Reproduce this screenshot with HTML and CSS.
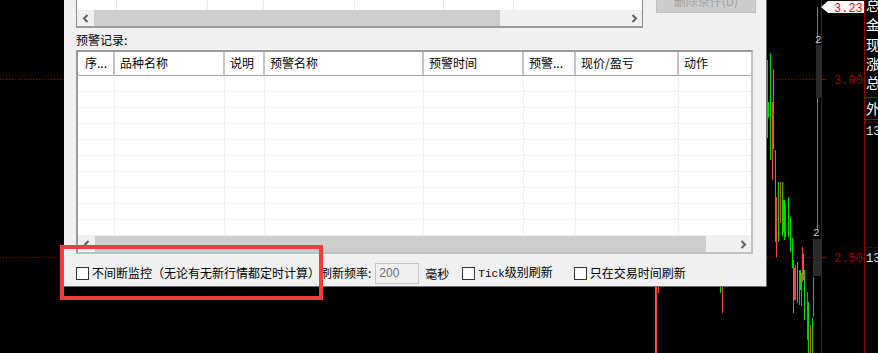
FILE: index.html
```html
<!DOCTYPE html>
<html lang="zh-CN">
<head>
<meta charset="utf-8">
<title>预警记录</title>
<link rel="stylesheet" href="styles.css">
</head>
<body>
<div class="screen">
  <svg class="chart" width="878" height="353" viewBox="0 0 878 353">
    <g class="dots" stroke="#a00000" stroke-width="1" stroke-dasharray="1 2">
      <line x1="0" y1="79.5" x2="64" y2="79.5"/>
      <line x1="767" y1="79.5" x2="821" y2="79.5"/>
      <line x1="0" y1="257.5" x2="64" y2="257.5"/>
      <line x1="767" y1="257.5" x2="821" y2="257.5"/>
      <line x1="865" y1="122.5" x2="878" y2="122.5"/>
      <line x1="865" y1="247.5" x2="878" y2="247.5"/>
    </g>
    <g stroke="#a00000" stroke-width="1">
      <line x1="822" y1="79.5" x2="826" y2="79.5"/>
      <line x1="822" y1="257.5" x2="826" y2="257.5"/>
      <line x1="864" y1="97.5" x2="878" y2="97.5"/>
      <line x1="864" y1="119.5" x2="878" y2="119.5"/>
    </g>
    <g stroke="#8b0000" stroke-width="1">
      <line x1="821.5" y1="0" x2="821.5" y2="353"/>
      <line x1="864.5" y1="0" x2="864.5" y2="353"/>
    </g>
    <rect x="816" y="45" width="5" height="53" fill="#2b2b2b"/>
    <rect x="813" y="239" width="8" height="37" fill="#2b2b2b"/>
    <g stroke="#00e000" stroke-width="1">
      <line x1="767.5" y1="60" x2="767.5" y2="138"/>
      <line x1="768.5" y1="102" x2="768.5" y2="118"/>
      <line x1="770.5" y1="53" x2="770.5" y2="160"/>
      <line x1="773.5" y1="69" x2="773.5" y2="149"/>
      <line x1="775.5" y1="150" x2="775.5" y2="242"/>
      <line x1="778.5" y1="182" x2="778.5" y2="242"/>
      <line x1="782.5" y1="182" x2="782.5" y2="236"/>
      <line x1="784.5" y1="200" x2="784.5" y2="240"/>
      <line x1="788.5" y1="197" x2="788.5" y2="237"/>
      <line x1="790.5" y1="217" x2="790.5" y2="252"/>
      <line x1="792.5" y1="238" x2="792.5" y2="268"/>
      <line x1="793.5" y1="260" x2="793.5" y2="313"/>
      <line x1="797.5" y1="262" x2="797.5" y2="303"/>
      <line x1="800.5" y1="270" x2="800.5" y2="290"/>
      <line x1="803.5" y1="254" x2="803.5" y2="280"/>
      <line x1="804.5" y1="270" x2="804.5" y2="320"/>
      <line x1="808.5" y1="302" x2="808.5" y2="353"/>
      <line x1="812.5" y1="318" x2="812.5" y2="353"/>
      <line x1="655.5" y1="287" x2="655.5" y2="353"/>
      <line x1="720.5" y1="287" x2="720.5" y2="293"/>
    </g>
    <g stroke="#ff4040" stroke-width="1">
      <line x1="772.5" y1="102" x2="772.5" y2="180"/>
      <line x1="776.5" y1="197" x2="776.5" y2="257"/>
      <line x1="780.5" y1="182" x2="780.5" y2="223"/>
      <line x1="783.5" y1="200" x2="783.5" y2="232"/>
      <line x1="785.5" y1="205" x2="785.5" y2="237"/>
      <line x1="794.5" y1="268" x2="794.5" y2="300"/>
      <line x1="795.5" y1="265" x2="795.5" y2="300"/>
      <line x1="799.5" y1="270" x2="799.5" y2="305"/>
      <line x1="801.5" y1="273" x2="801.5" y2="306"/>
      <line x1="802.5" y1="247" x2="802.5" y2="282"/>
      <line x1="807.5" y1="292" x2="807.5" y2="340"/>
      <line x1="810.5" y1="325" x2="810.5" y2="353"/>
      <line x1="813.5" y1="277" x2="813.5" y2="317"/>
      <line x1="817.5" y1="7" x2="817.5" y2="44"/>
      <line x1="817.5" y1="98" x2="817.5" y2="230"/>
      <line x1="656.5" y1="287" x2="656.5" y2="353"/>
      <line x1="658.5" y1="287" x2="658.5" y2="293"/>
      <line x1="722.5" y1="287" x2="722.5" y2="313"/>
    </g>
    <polygon points="821,7 828,1 864,1 864,13 828,13" fill="#ffffff"/>
    <text class="px px-hi" x="834" y="12">3.23</text>
    <text class="px" x="834" y="84">3.00</text>
    <text class="px" x="834" y="262">2.50</text>
    <text class="vol" x="815" y="43">2</text>
    <text class="vol" x="813" y="236">2</text>
    <text class="side" x="866" y="10">总</text>
    <text class="side" x="866" y="30">金</text>
    <text class="side" x="866" y="50">现</text>
    <text class="side" x="866" y="69">涨</text>
    <text class="side" x="866" y="88">总</text>
    <text class="side" x="866" y="114">外</text>
    <text class="num" x="866" y="135">13</text>
    <text class="num" x="866" y="262">13</text>
  </svg>

  <div class="dialog">
    <div class="toprow">
      <div class="list list-top">
        <div class="body-top">
          <span class="tc" style="width:39px"></span>
          <span class="tc" style="width:90px"></span>
          <span class="tc" style="width:55px"></span>
          <span class="tc" style="width:90px"></span>
          <span class="tc" style="width:88px"></span>
          <span class="tc" style="width:69px"></span>
        </div>
        <div class="hscroll">
          <span class="arrow"><svg width="8" height="9" viewBox="0 0 8 9"><polyline points="5.5,1 2,4.5 5.5,8" fill="none" stroke="#606060" stroke-width="2"/></svg></span>
          <span class="thumb thumb-top"></span>
          <span class="track"></span>
          <span class="arrow"><svg width="8" height="9" viewBox="0 0 8 9"><polyline points="2.5,1 6,4.5 2.5,8" fill="none" stroke="#606060" stroke-width="2"/></svg></span>
        </div>
      </div>
      <button class="btn" disabled>删除条件(D)</button>
    </div>

    <div class="label">预警记录:</div>

    <div class="list list-main">
      <div class="grid thead">
        <div class="th th-first">序...</div>
        <div class="th">品种名称</div>
        <div class="th">说明</div>
        <div class="th">预警名称</div>
        <div class="th">预警时间</div>
        <div class="th">预警...</div>
        <div class="th">现价/盈亏</div>
        <div class="th th-last">动作</div>
      </div>
      <div class="tbody">
        <div class="grid row"><i></i><i></i><i></i><i></i><i></i><i></i><i></i><i></i></div>
        <div class="grid row"><i></i><i></i><i></i><i></i><i></i><i></i><i></i><i></i></div>
        <div class="grid row"><i></i><i></i><i></i><i></i><i></i><i></i><i></i><i></i></div>
        <div class="grid row"><i></i><i></i><i></i><i></i><i></i><i></i><i></i><i></i></div>
        <div class="grid row"><i></i><i></i><i></i><i></i><i></i><i></i><i></i><i></i></div>
        <div class="grid row"><i></i><i></i><i></i><i></i><i></i><i></i><i></i><i></i></div>
        <div class="grid row"><i></i><i></i><i></i><i></i><i></i><i></i><i></i><i></i></div>
        <div class="grid row"><i></i><i></i><i></i><i></i><i></i><i></i><i></i><i></i></div>
        <div class="grid row"><i></i><i></i><i></i><i></i><i></i><i></i><i></i><i></i></div>
        <div class="grid row"><i></i><i></i><i></i><i></i><i></i><i></i><i></i><i></i></div>
      </div>
      <div class="hscroll">
        <span class="arrow"><svg width="8" height="9" viewBox="0 0 8 9"><polyline points="5.5,1 2,4.5 5.5,8" fill="none" stroke="#606060" stroke-width="2"/></svg></span>
        <span class="thumb thumb-main"></span>
        <span class="track"></span>
        <span class="arrow"><svg width="8" height="9" viewBox="0 0 8 9"><polyline points="2.5,1 6,4.5 2.5,8" fill="none" stroke="#606060" stroke-width="2"/></svg></span>
      </div>
    </div>

    <div class="options">
      <label class="opt opt-1"><span class="box"></span><span class="txt">不间断监控（无论有无新行情都定时计算）刷新频率:</span></label>
      <span class="input">200</span>
      <span class="unit">毫秒</span>
      <label class="opt opt-2"><span class="box"></span><span class="txt"><span class="mono">Tick</span>级别刷新</span></label>
      <label class="opt opt-3"><span class="box"></span><span class="txt">只在交易时间刷新</span></label>
    </div>
  </div>

  <div class="highlight"></div>
</div>
</body>
</html>
```

FILE: styles.css
```css
html, body {
  margin: 0;
  padding: 0;
  background: #000;
}

.screen {
  position: relative;
  width: 878px;
  height: 353px;
  overflow: hidden;
  background: #000;
  font-family: "Noto Sans CJK SC", "Noto Sans", sans-serif;
  font-size: 12px;
  color: #000;
}

.chart {
  position: absolute;
  left: 0;
  top: 0;
  display: block;
}

.chart .px {
  font-family: "Liberation Mono", "DejaVu Sans Mono", monospace;
  font-size: 12px;
  fill: #a00000;
}

.chart .px-hi {
  fill: #ff0000;
}

.chart .vol {
  font-family: "Liberation Mono", monospace;
  font-size: 11px;
  fill: #c8c8c8;
}

.chart .side {
  font-family: "Noto Sans CJK SC", sans-serif;
  font-size: 14px;
  fill: #ffffff;
}

.chart .num {
  font-family: "Liberation Mono", monospace;
  font-size: 12px;
  fill: #cfe6ff;
}

/* dialog window */
.dialog {
  position: absolute;
  left: 64px;
  top: 0;
  width: 690px;
  height: 286px;
  background: #f0f0f0;
  border-right: 1px solid #6e6e6e;
  border-bottom: 1px solid #6e6e6e;
  padding-left: 12px;
  box-sizing: content-box;
  display: flex;
  flex-direction: column;
  z-index: 2;
}

.toprow {
  display: flex;
  align-items: flex-start;
  height: 28px;
  flex: none;
}

.list {
  background: #fff;
  border: 1px solid #8c8c8c;
  box-sizing: border-box;
  display: flex;
  flex-direction: column;
}

.list-top {
  width: 567px;
  height: 28px;
  border-top: none;
  border-bottom: 2px solid #9a9a9a;
}

.body-top {
  height: 10px;
  display: flex;
  background: #fff;
  flex: none;
}

.tc {
  height: 10px;
  border-right: 1px solid #ececec;
  flex: none;
}

.hscroll {
  height: 16px;
  display: flex;
  background: #f0f0f0;
  flex: none;
}

.arrow {
  width: 17px;
  height: 16px;
  display: flex;
  align-items: center;
  justify-content: center;
  flex: none;
}

.thumb {
  height: 16px;
  background: #cdcdcd;
  flex: none;
}

.thumb-top {
  width: 406px;
}

.thumb-main {
  width: 611px;
}

.track {
  flex: 1;
}

.btn {
  margin-left: 13px;
  margin-top: -11px;
  width: 100px;
  height: 24px;
  border: 1px solid #bfbfbf;
  background: #cccccc;
  color: #a0a0a0;
  font-family: "Noto Sans CJK SC", sans-serif;
  font-size: 12px;
  line-height: 20px;
  padding: 0;
}

.label {
  margin-top: 5px;
  height: 14px;
  line-height: 14px;
  flex: none;
}

.list-main {
  margin-top: 3px;
  width: 677px;
  height: 204px;
  border: 2px solid #9a9a9a;
  border-right-color: #c0c0c0;
  border-bottom-color: #c0c0c0;
  flex: none;
}

.grid {
  display: grid;
  grid-template-columns: 37px 110px 40px 159px 100px 52px 103px 72px;
}

.thead {
  height: 24px;
  border-bottom: 1px solid #a8a8a8;
  box-sizing: border-box;
  background: #fff;
  flex: none;
}

.th {
  border-right: 2px solid #c4c4c4;
  padding-left: 5px;
  line-height: 22px;
  white-space: nowrap;
  overflow: hidden;
}

.th-first {
  padding-left: 7px;
}

.th-last {
  border-right: none;
}

.tbody {
  flex: none;
}

.row {
  height: 16px;
  box-sizing: border-box;
  border-bottom: 1px solid #f0f0f0;
}

.row i {
  border-right: 1px solid #f0f0f0;
}

.row i:last-child {
  border-right: none;
}

/* bottom options */
.options {
  margin-top: 8px;
  height: 22px;
  display: flex;
  align-items: center;
  flex: none;
}

.opt {
  display: flex;
  align-items: center;
}

.box {
  width: 13px;
  height: 13px;
  box-sizing: border-box;
  border: 1px solid #333;
  background: #fff;
  margin-right: 3px;
  flex: none;
}

.txt {
  white-space: nowrap;
  line-height: 16px;
}

.mono {
  font-family: "Liberation Mono", "DejaVu Sans Mono", monospace;
  font-size: 11px;
}

.input {
  margin-left: 4px;
  width: 44px;
  height: 21px;
  box-sizing: border-box;
  border: 1px solid #c4c4c4;
  background: #f0f0f0;
  color: #6d6d6d;
  font-family: "Liberation Sans", Arial, sans-serif;
  font-size: 12px;
  line-height: 19px;
  padding-left: 3px;
}

.unit {
  margin-left: 6px;
}

.opt-2 {
  margin-left: 13px;
}

.opt-3 {
  margin-left: 21px;
}

.highlight {
  position: absolute;
  left: 60px;
  top: 245px;
  width: 263px;
  height: 55px;
  box-sizing: border-box;
  border: 4px solid #f43c3c;
  z-index: 3;
}
```
